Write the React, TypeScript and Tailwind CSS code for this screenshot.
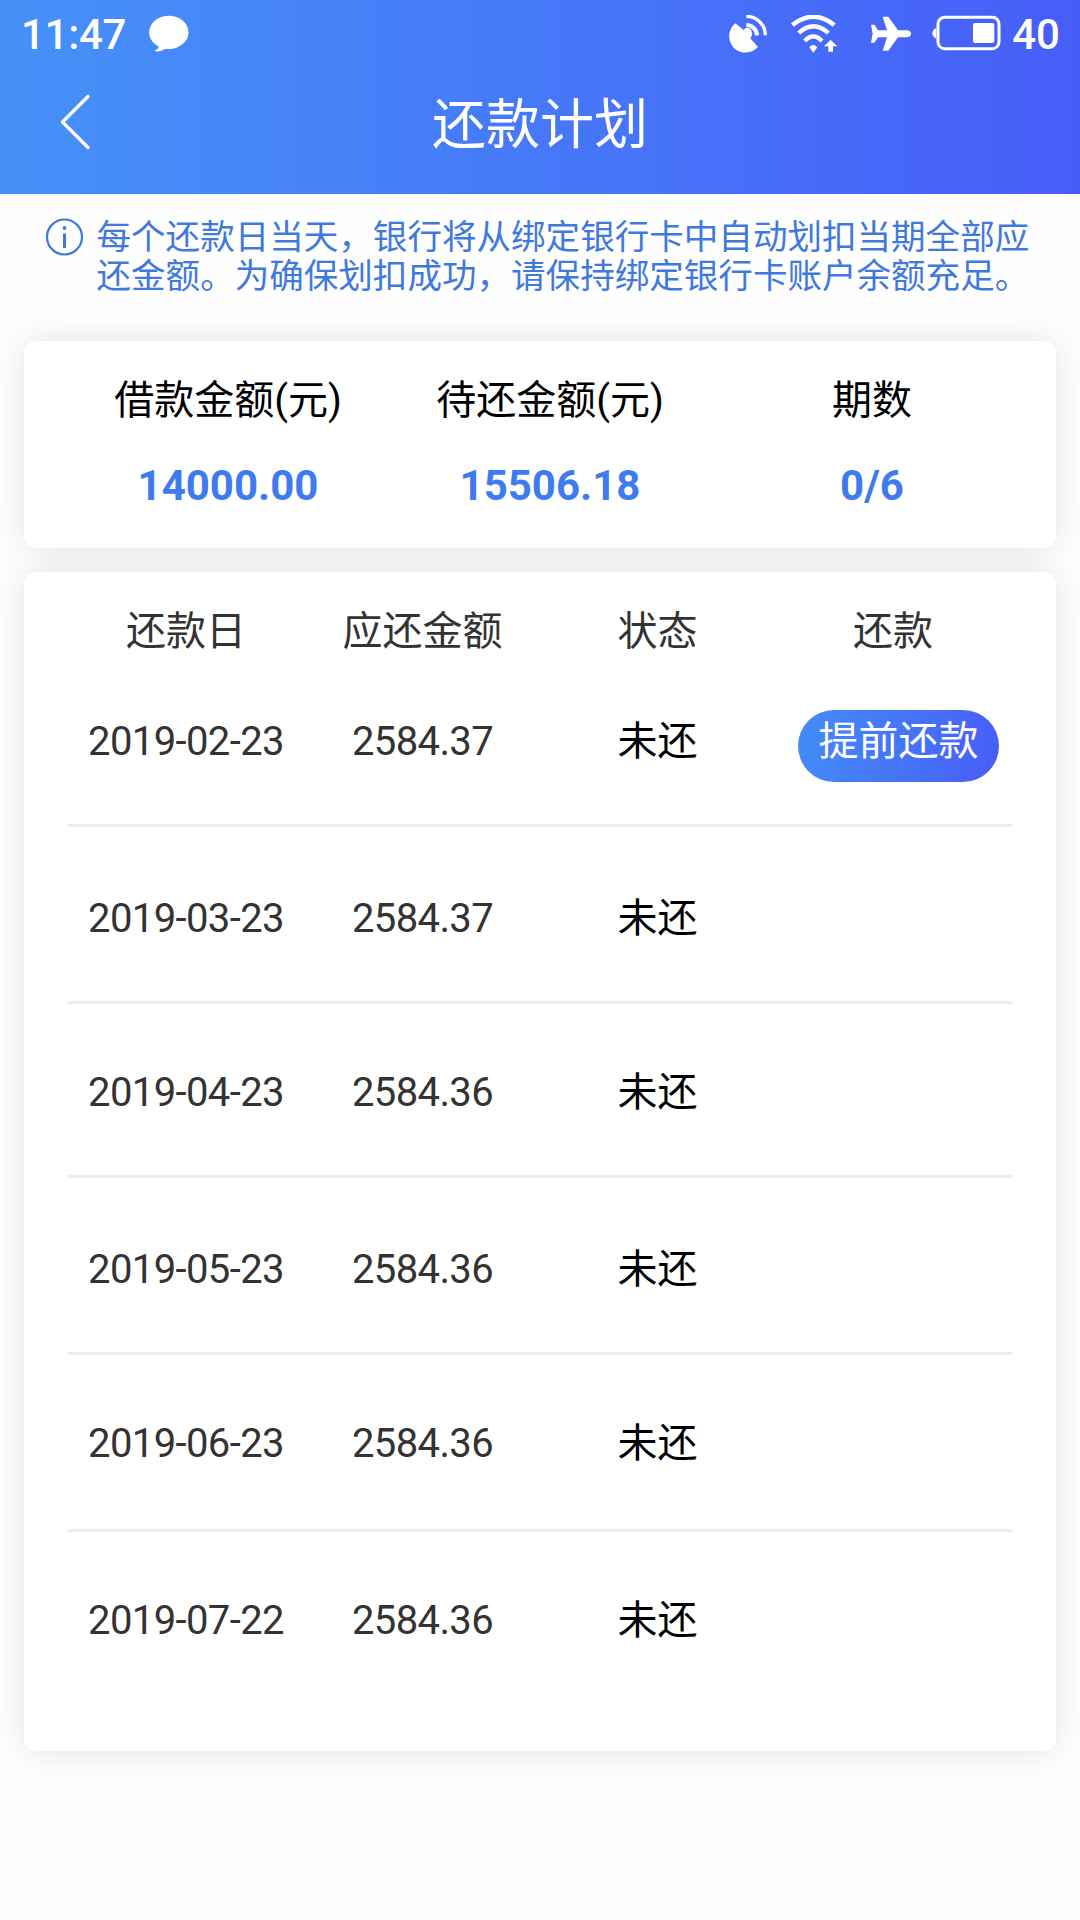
const notice = [
  "每个还款日当天，银行将从绑定银行卡中自动划扣当期全部应",
  "还金额。为确保划扣成功，请保持绑定银行卡账户余额充足。",
];

const summary = [
  { label: "借款金额(元)", value: "14000.00" },
  { label: "待还金额(元)", value: "15506.18" },
  { label: "期数", value: "0/6" },
];

const plan = [
  { date: "2019-02-23", amount: "2584.37", status: "未还", box: "h-[175px] pt-[65px]", payable: true },
  { date: "2019-03-23", amount: "2584.37", status: "未还", box: "h-[177px] pt-[67px]" },
  { date: "2019-04-23", amount: "2584.36", status: "未还", box: "h-[174px] pt-16" },
  { date: "2019-05-23", amount: "2584.36", status: "未还", box: "h-[177px] pt-[67px]" },
  { date: "2019-06-23", amount: "2584.36", status: "未还", box: "h-[177px] pt-16" },
  { date: "2019-07-22", amount: "2584.36", status: "未还", box: "h-[177px] pt-16" },
];

const StatusBar = () => (
  <div className="flex h-[68px] items-center pt-px pl-[21px] pr-[20px] text-[42px] leading-none font-medium">
    <span className="w-32 tracking-[-0.3px]">11:47</span>
    <svg className="h-10 w-10" viewBox="446 43 120 120" fill="white">
      <ellipse cx="505.500" cy="95" rx="59" ry="50" />
      <path d="M477 132Q475 146 461 151Q478 156 499 143Z" />
    </svg>

    <div className="ml-auto flex items-center">
      <svg className="h-10 w-10" viewBox="84 43 120 120" fill="none" stroke="white">
        <path
          d="M106 68L131 88Q140 76 151 85Q162 98 151 113L174 139A50 50 0 0 1 101 141A50 50 0 0 1 106 68Z"
          fill="white"
          stroke="none"
        />
        <path d="M139 47A57 57 0 0 1 196 104" strokeWidth="10" />
        <path d="M139 73A32 32 0 0 1 171 104" strokeWidth="12" />
      </svg>
      <svg className="ml-[22px] h-10 w-12" viewBox="269 43 144 120" fill="none" stroke="white">
        <path d="M276 73Q339 23 402 73" strokeWidth="13" />
        <path d="M295 97Q339 57 384 97" strokeWidth="13" />
        <path d="M313 121Q339 93 365 121" strokeWidth="13" />
        <path d="M327 140Q339 126 351 140L339 156Z" fill="white" stroke="none" />
        <path d="M391 118L411 137H398V153H384V137H371Z" fill="white" stroke="none" />
      </svg>
      <svg className="ml-8 h-10 w-[42px]" viewBox="510 43 126 120" fill="white">
        <path d="M513 72H523L534 89H561L548 48H565L594 89H619Q633 90 633 99.500Q633 109 619 110H594L565 150H548L561 110H534L523 126H513L518 99Z" />
      </svg>
      <svg className="ml-5 h-10 w-[69px]" viewBox="695 45 207 120" fill="none">
        <path d="M708 84Q696 90 696 100Q696 110 708 116Z" fill="white" />
        <rect x="713" y="52" width="183" height="94" rx="20" stroke="white" strokeWidth="9" />
        <rect x="818" y="69" width="64" height="60" rx="6" fill="white" />
      </svg>
      <span className="ml-[11px]">40</span>
    </div>
  </div>
);

const Header = () => (
  <header className="h-[194px] bg-linear-to-r from-[#4691f8] to-[#475df8] text-white">
    <StatusBar />
    <div className="grid h-[108px] grid-cols-[200px_1fr_200px] items-center">
      <svg
        className="ml-[58px] h-[60px] w-9"
        viewBox="0 0 36 60"
        fill="none"
        stroke="currentColor"
        strokeWidth="3.300"
        strokeLinecap="round"
        strokeLinejoin="round"
      >
        <path d="M30 4.500L4.500 30L30 55.500" />
      </svg>
      <h1 className="pt-2 text-center text-[54px] leading-none font-normal">还款计划</h1>
    </div>
  </header>
);

const Notice = () => (
  <div className="flex h-[147px] pt-6 pl-[45px] text-[34.560px] leading-[39px] text-[#4079de]">
    <svg className="h-[39px] w-[39px]" viewBox="0 0 39 39" fill="none" stroke="currentColor">
      <circle cx="19.500" cy="19" r="17.500" strokeWidth="2.200" />
      <path d="M19.500 15.500V30" strokeWidth="3" />
      <circle cx="19.500" cy="10" r="1.900" fill="currentColor" stroke="none" />
    </svg>
    <p className="ml-[12.500px] whitespace-nowrap">
      {notice.map((line) => (
        <span key={line} className="block">
          {line}
        </span>
      ))}
    </p>
  </div>
);

const Summary = () => (
  <section className="grid h-[207px] grid-cols-[322px_322px_322px] rounded-xl bg-white pl-[43px] text-center shadow-[0_0_36px_rgba(0,0,0,0.11)]">
    {summary.map(({ label, value }) => (
      <div key={label} className="pt-[35px]">
        <div className="text-[40px] leading-[50px] text-black">{label}</div>
        <div className="mt-[35px] text-[42px] leading-[50px] font-bold text-[#3f7bf0]">{value}</div>
      </div>
    ))}
  </section>
);

const Plan = () => (
  <section className="mt-6 h-[1179px] rounded-xl bg-white px-11 text-[40px] leading-[50px] text-[#333] shadow-[0_0_36px_rgba(0,0,0,0.11)]">
    <div className="grid h-[80px] grid-cols-[236px_237px_233px_238px] pt-[35px] text-center">
      <div>还款日</div>
      <div>应还金额</div>
      <div>状态</div>
      <div>还款</div>
    </div>
    {plan.map(({ date, amount, status, box, payable }) => (
      <div
        key={date}
        className={`grid grid-cols-[236px_237px_233px_238px] items-start border-b-3 border-[#ededed] text-center last:border-transparent ${box}`}
      >
        <div className="tracking-[-0.6px]">{date}</div>
        <div className="tracking-[-0.6px]">{amount}</div>
        <div className="text-black">{status}</div>
        {payable && (
          <button className="-mt-[7px] ml-6 h-[72px] w-[201px] rounded-full bg-linear-100 from-[#438cf7] to-[#485cf8] pb-2 text-white">
            提前还款
          </button>
        )}
      </div>
    ))}
  </section>
);

export const App = () => {
  return (
    <main className="h-[1920px] w-[1080px] overflow-hidden bg-[#fefefe] font-[Roboto,'Noto_Sans_CJK_SC',sans-serif]">
      <Header />
      <Notice />
      <div className="px-6">
        <Summary />
        <Plan />
      </div>
    </main>
  );
};

export default App;
